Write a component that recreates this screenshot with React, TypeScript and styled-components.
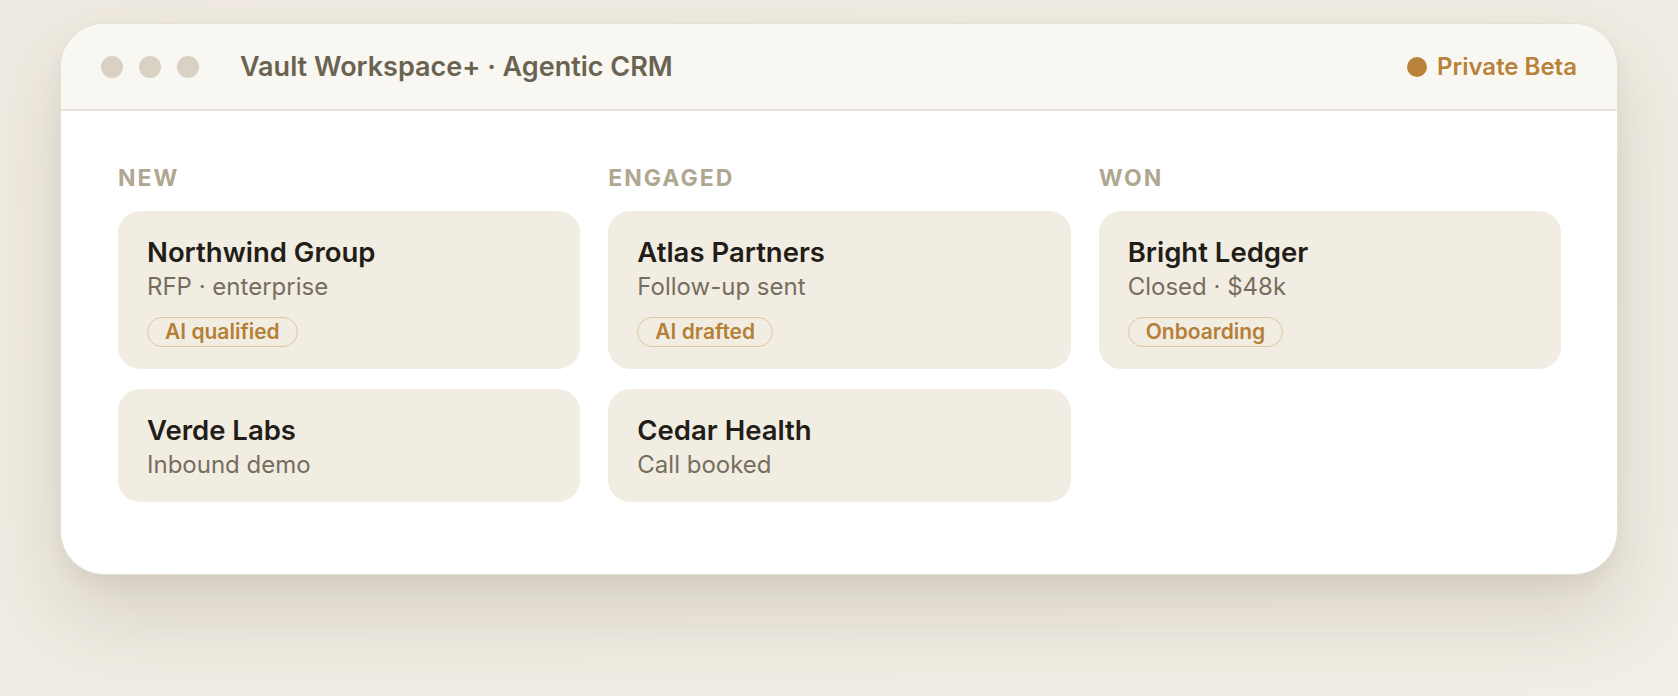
import styled, { createGlobalStyle } from "styled-components";

type Deal = {
  name: string;
  note: string;
  badge?: string;
};

type Stage = {
  title: string;
  deals: Deal[];
};

const stages: Stage[] = [
  {
    title: "New",
    deals: [
      { name: "Northwind Group", note: "RFP · enterprise", badge: "AI qualified" },
      { name: "Verde Labs", note: "Inbound demo" },
    ],
  },
  {
    title: "Engaged",
    deals: [
      { name: "Atlas Partners", note: "Follow-up sent", badge: "AI drafted" },
      { name: "Cedar Health", note: "Call booked" },
    ],
  },
  {
    title: "Won",
    deals: [{ name: "Bright Ledger", note: "Closed · $48k", badge: "Onboarding" }],
  },
];

export default function App() {
  return (
    <>
      <GlobalStyle />
      <Page>
        <Window>
          <TitleBar>
            <Lights>
              <Light />
              <Light />
              <Light />
            </Lights>
            <WindowTitle>Vault Workspace+ · Agentic CRM</WindowTitle>
            <Status>
              <StatusDot />
              Private Beta
            </Status>
          </TitleBar>

          <Board>
            {stages.map((stage) => (
              <Column key={stage.title}>
                <StageLabel>{stage.title}</StageLabel>
                {stage.deals.map((deal) => (
                  <Card key={deal.name}>
                    <DealName>{deal.name}</DealName>
                    <DealNote>{deal.note}</DealNote>
                    {deal.badge && <Badge>{deal.badge}</Badge>}
                  </Card>
                ))}
              </Column>
            ))}
          </Board>
        </Window>
      </Page>
    </>
  );
}

const GlobalStyle = createGlobalStyle`
  * { box-sizing: border-box; }
  html, body {
    margin: 0;
    padding: 0;
    background: #f1ede4;
    font-family: Inter, "Noto Sans", "Liberation Sans", sans-serif;
  }
`;

const Page = styled.div`
  height: 100vh;
  padding: 23px 60px 0;
  background: linear-gradient(160deg, #f0ebe2 0%, #f1ede4 60%, #f2eee5 100%);
  overflow: hidden;
`;

const Window = styled.div`
  background: #ffffff;
  border: 1px solid #e4e0d8;
  border-radius: 44px;
  overflow: hidden;
  box-shadow: 0 40px 80px rgba(90, 72, 40, 0.17), 0 8px 20px rgba(90, 72, 40, 0.06);
`;

const TitleBar = styled.div`
  height: 87px;
  display: flex;
  align-items: center;
  padding: 0 40px;
  background: #f9f7f2;
  border-bottom: 2px solid #e6e3dc;
`;

const Lights = styled.div`
  display: flex;
  gap: 16px;
  margin-right: 41px;
`;

const Light = styled.span`
  width: 22px;
  height: 22px;
  border-radius: 50%;
  background: #d9d1c4;
`;

const WindowTitle = styled.div`
  flex: 1;
  font-size: 27px;
  font-weight: 600;
  color: #6b6352;
`;

const Status = styled.div`
  display: flex;
  align-items: center;
  gap: 10px;
  font-size: 24px;
  font-weight: 600;
  color: #b8823a;
`;

const StatusDot = styled.span`
  width: 20px;
  height: 20px;
  border-radius: 50%;
  background: #b8823a;
`;

const Board = styled.div`
  display: grid;
  grid-template-columns: repeat(3, 1fr);
  column-gap: 28px;
  align-items: start;
  padding: 53px 56px 72px 57px;
`;

const Column = styled.div`
  display: flex;
  flex-direction: column;
  gap: 20px;
`;

const StageLabel = styled.div`
  font-size: 23px;
  line-height: 28px;
  font-weight: 700;
  letter-spacing: 2px;
  text-transform: uppercase;
  color: #b0a792;
  margin-bottom: -1px;
`;

const Card = styled.div`
  display: flex;
  flex-direction: column;
  align-items: flex-start;
  padding: 24px 29px 22px;
  background: #f2ede3;
  border-radius: 22px;
`;

const DealName = styled.div`
  font-size: 27.5px;
  line-height: 35px;
  font-weight: 600;
  color: #221d16;
`;

const DealNote = styled.div`
  margin-top: 2px;
  font-size: 24px;
  line-height: 30px;
  color: #766d5e;
`;

const Badge = styled.span`
  margin-top: 15px;
  padding: 3px 17px;
  border: 1.5px solid #dfc59d;
  border-radius: 999px;
  font-size: 21px;
  line-height: 22px;
  font-weight: 600;
  color: #b57f36;
`;
